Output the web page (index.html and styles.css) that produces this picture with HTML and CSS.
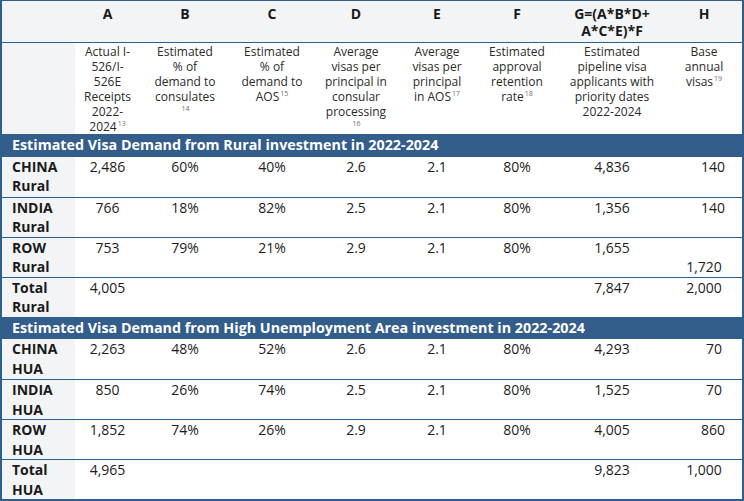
FILE: index.html
```html
<!DOCTYPE html>
<html>
<head>
<meta charset="utf-8">
<link rel="stylesheet" href="styles.css">
</head>
<body>
<div class="frame">
<table class="grid">
  <colgroup>
    <col class="c0"><col class="ca"><col class="cb"><col class="cc"><col class="cd"><col class="ce"><col class="cf"><col class="cg"><col class="ch">
  </colgroup>
  <tr class="letters">
    <td class="lab"></td>
    <td>A</td><td>B</td><td>C</td><td>D</td><td>E</td><td>F</td>
    <td>G=(A*B*D+<br>A*C*E)*F</td>
    <td>H</td>
  </tr>
  <tr class="desc">
    <td class="lab"></td>
    <td>Actual I-<br>526/I-<br>526E<br>Receipts<br>2022-<br>2024<sup>13</sup></td>
    <td>Estimated<br>% of<br>demand to<br>consulates<br><sup>14</sup></td>
    <td>Estimated<br>% of<br>demand to<br>AOS<sup>15</sup></td>
    <td>Average<br>visas per<br>principal in<br>consular<br>processing<br><sup>16</sup></td>
    <td>Average<br>visas per<br>principal<br>in AOS<sup>17</sup></td>
    <td>Estimated<br>approval<br>retention<br>rate<sup>18</sup></td>
    <td>Estimated<br>pipeline visa<br>applicants with<br>priority dates<br>2022-2024</td>
    <td>Base<br>annual<br>visas<sup>19</sup></td>
  </tr>
  <tr class="section"><td colspan="9">Estimated Visa Demand from Rural investment in 2022-2024</td></tr>
  <tr class="row">
    <td class="lab">CHINA<br>Rural</td><td>2,486</td><td>60%</td><td>40%</td><td>2.6</td><td>2.1</td><td>80%</td><td>4,836</td><td class="r">140</td>
  </tr>
  <tr class="row">
    <td class="lab">INDIA<br>Rural</td><td>766</td><td>18%</td><td>82%</td><td>2.5</td><td>2.1</td><td>80%</td><td>1,356</td><td class="r">140</td>
  </tr>
  <tr class="row">
    <td class="lab">ROW<br>Rural</td><td>753</td><td>79%</td><td>21%</td><td>2.9</td><td>2.1</td><td>80%</td><td>1,655</td><td><br>1,720</td>
  </tr>
  <tr class="row">
    <td class="lab">Total<br>Rural</td><td>4,005</td><td></td><td></td><td></td><td></td><td></td><td>7,847</td><td>2,000</td>
  </tr>
  <tr class="section"><td colspan="9">Estimated Visa Demand from High Unemployment Area investment in 2022-2024</td></tr>
  <tr class="row">
    <td class="lab">CHINA<br>HUA</td><td>2,263</td><td>48%</td><td>52%</td><td>2.6</td><td>2.1</td><td>80%</td><td>4,293</td><td class="r r2">70</td>
  </tr>
  <tr class="row">
    <td class="lab">INDIA<br>HUA</td><td>850</td><td>26%</td><td>74%</td><td>2.5</td><td>2.1</td><td>80%</td><td>1,525</td><td class="r r2">70</td>
  </tr>
  <tr class="row">
    <td class="lab">ROW<br>HUA</td><td>1,852</td><td>74%</td><td>26%</td><td>2.9</td><td>2.1</td><td>80%</td><td>4,005</td><td class="r">860</td>
  </tr>
  <tr class="row">
    <td class="lab">Total<br>HUA</td><td>4,965</td><td></td><td></td><td></td><td></td><td></td><td>9,823</td><td>1,000</td>
  </tr>
</table>
</div>
</body>
</html>
```

FILE: styles.css
```css
html, body {
  margin: 0;
  padding: 0;
  background: #ffffff;
}
body {
  font-family: "Open Sans", "DejaVu Sans", sans-serif;
  color: #1c1c1c;
}
.frame {
  width: 740px;
  border-top: 1px solid #2d5f8f;
  border-left: 2px solid #2d5f8f;
  border-right: 2px solid #2d5f8f;
  border-bottom: 2px solid #2d5f8f;
}
.grid {
  width: 740px;
  table-layout: fixed;
  border-collapse: collapse;
  border-spacing: 0;
}
.c0 { width: 73px; }
.ca { width: 65px; }
.cb { width: 90px; }
.cc { width: 84px; }
.cd { width: 84px; }
.ce { width: 78px; }
.cf { width: 82px; }
.cg { width: 108px; }
.ch { width: 76px; }
.grid td {
  padding: 0;
  vertical-align: top;
  text-align: center;
}
.letters td {
  background: #f3f4f6;
  font-weight: 700;
  font-size: 14px;
  line-height: 17px;
  height: 37px;
  padding-top: 4px;
  color: #1a1a1a;
}
.desc td {
  border-top: 1px solid #2d5f8f;
  font-size: 12px;
  line-height: 15px;
  height: 90px;
  padding-top: 1px;
  color: #2a2a2a;
}
sup {
  font-size: 7px;
  line-height: 0;
  vertical-align: baseline;
  position: relative;
  top: -5px;
  color: #6f6f6f;
  margin-left: 1px;
}
.grid td.lab {
  background: #f3f4f6;
  text-align: left;
  padding-left: 10px;
}
.section td {
  background: #335d8a;
  color: #ffffff;
  font-weight: 700;
  font-size: 14.3px;
  line-height: 22px;
  height: 22.5px;
  text-align: left;
  padding-left: 10px;
}
.row td {
  border-top: 1px solid #2d5f8f;
  font-size: 14px;
  line-height: 19.5px;
  height: 39px;
}
.section + .row td {
  border-top: none;
  height: 40px;
}
.row td.lab {
  font-weight: 700;
  color: #1a1a1a;
}
.grid td.r {
  text-align: right;
  padding-right: 17px;
}
.grid td.r2 {
  padding-right: 20px;
}
```
